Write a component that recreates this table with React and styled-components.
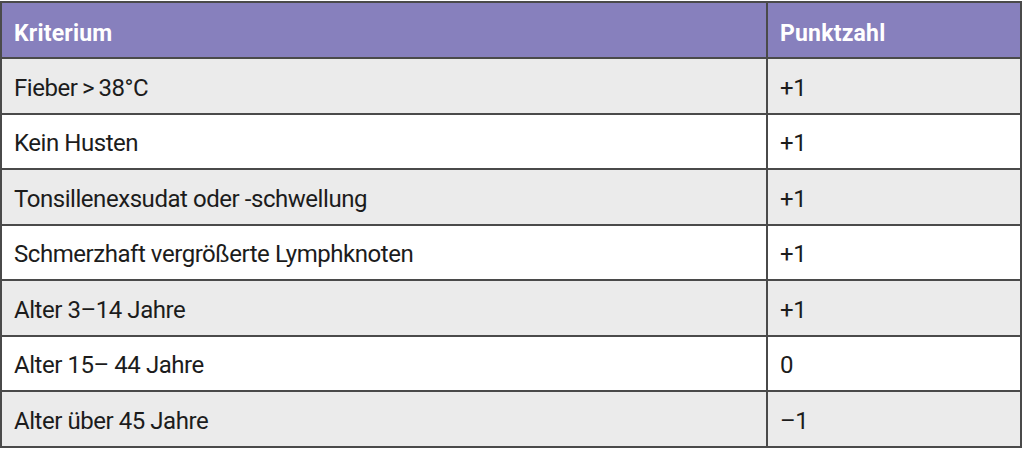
import React from "react";
import styled, { createGlobalStyle } from "styled-components";

const Global = createGlobalStyle`
  html, body { margin: 0; padding: 0; background: #ffffff; }
  body { font-family: Roboto, "Liberation Sans", sans-serif; }
`;

const Wrap = styled.div`
  padding: 1px 2px 0 0;
`;

const Table = styled.table`
  width: 1022px;
  border-collapse: collapse;
  table-layout: fixed;
  border: 2px solid #4a4a4a;
`;

const HeadCell = styled.th`
  background: #8780bd;
  color: #ffffff;
  font-weight: 700;
  font-size: 23px;
  text-align: left;
  height: 56px;
  padding: 6px 12px 0;
  border: 2px solid #4a4a4a;
  letter-spacing: 0.2px;
  box-sizing: border-box;
`;

const Cell = styled.td`
  background: ${(p) => (p.$shaded ? "#ebebeb" : "#ffffff")};
  color: #1c1c1c;
  font-size: 24px;
  font-weight: 400;
  height: 55.5px;
  padding: 4px 12px 0 12px;
  border: 2px solid #4a4a4a;
  letter-spacing: -0.45px;
  box-sizing: border-box;
  white-space: nowrap;
`;

const rows = [
  ["Fieber\u2009>\u200938°C", "+1"],
  ["Kein Husten", "+1"],
  ["Tonsillenexsudat oder -schwellung", "+1"],
  ["Schmerzhaft vergrößerte Lymphknoten", "+1"],
  ["Alter 3–14 Jahre", "+1"],
  ["Alter 15– 44 Jahre", "0"],
  ["Alter über 45 Jahre", "–1"],
];

export default function App() {
  return (
    <>
      <Global />
      <Wrap>
        <Table>
          <colgroup>
            <col style={{ width: 766 }} />
            <col />
          </colgroup>
          <thead>
            <tr>
              <HeadCell>Kriterium</HeadCell>
              <HeadCell>Punktzahl</HeadCell>
            </tr>
          </thead>
          <tbody>
            {rows.map(([k, v], i) => (
              <tr key={k}>
                <Cell $shaded={i % 2 === 0}>{k}</Cell>
                <Cell $shaded={i % 2 === 0}>{v}</Cell>
              </tr>
            ))}
          </tbody>
        </Table>
      </Wrap>
    </>
  );
}
